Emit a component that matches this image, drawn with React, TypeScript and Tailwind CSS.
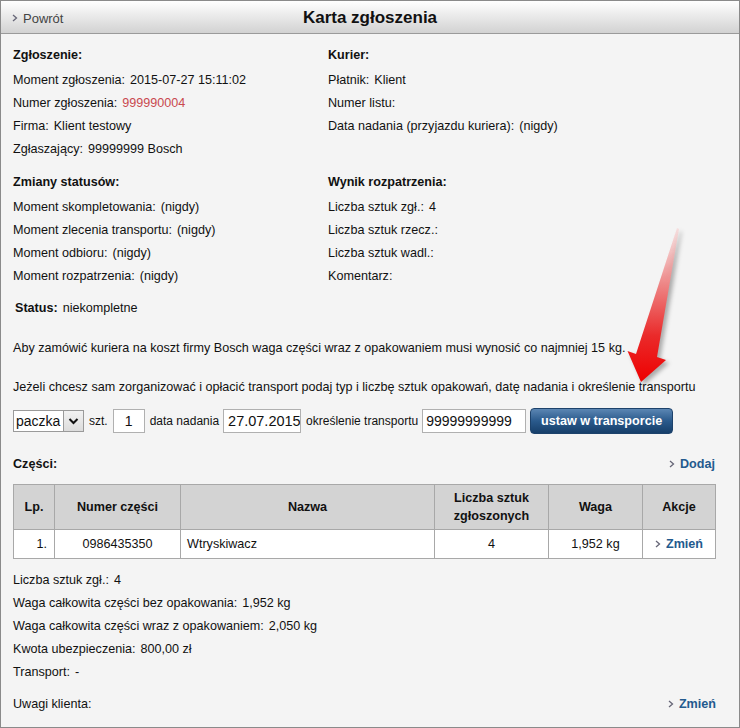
import React from 'react';

const Row: React.FC<{ label: string; value?: React.ReactNode }> = ({ label, value }) => (
  <div className="leading-[23px] whitespace-nowrap">
    {label}
    {value !== undefined && <span className="ml-[5px]">{value}</span>}
  </div>
);

const Head: React.FC<{ children: React.ReactNode }> = ({ children }) => (
  <div className="font-bold leading-[23px] mb-[2px]">{children}</div>
);

const Chevron: React.FC = () => (
  <svg width="6" height="8" viewBox="0 0 6 8" className="inline-block mr-[5px] mb-[1px]">
    <path d="M1 1 L4.5 4 L1 7" fill="none" stroke="#667" strokeWidth="1.3" />
  </svg>
);

const Arrow: React.FC = () => (
  <svg
    width="72"
    height="168"
    viewBox="0 0 72 168"
    className="absolute left-[616px] top-[220px] pointer-events-none drop-shadow-[3px_3px_2px_rgba(0,0,0,0.3)]"
  >
    <defs>
      <linearGradient id="arr" x1="0" y1="0" x2="0" y2="1">
        <stop offset="0" stopColor="#f7d0d0" stopOpacity="0.6" />
        <stop offset="0.35" stopColor="#ee8a8a" />
        <stop offset="0.7" stopColor="#ea2a2a" />
        <stop offset="1" stopColor="#ee0000" />
      </linearGradient>
    </defs>
    <path d="M60 7 L62 8 L40 136 L49 139 L24 161 L10.5 130 L19 133 Z" fill="url(#arr)" />
  </svg>
);

const App: React.FC = () => {
  return (
    <div className="w-[740px] h-[728px] bg-white font-['Liberation_Sans',Arial,sans-serif] text-[12.6px] text-[#111]">
      <div className="relative h-[728px] border border-[#8a8a8a] bg-[#f4f4f4] flex flex-col">
        <div className="h-[33px] shrink-0 border-b border-[#9a9a9a] bg-gradient-to-b from-white to-[#d2d2d2] flex items-center relative">
          <div className="absolute left-[11px] top-[8px] text-[13px] text-[#444] flex items-center">
            <Chevron />
            Powrót
          </div>
          <div className="w-full text-center font-bold text-[17px] text-[#111] pt-[1px]">Karta zgłoszenia</div>
        </div>

        <div className="px-[12px] pt-[10px]">
          <div className="grid grid-cols-[315px_1fr]">
            <div>
              <Head>Zgłoszenie:</Head>
              <Row label="Moment zgłoszenia:" value="2015-07-27 15:11:02" />
              <Row label="Numer zgłoszenia:" value={<span className="text-[#c9494f]">999990004</span>} />
              <Row label="Firma:" value="Klient testowy" />
              <Row label="Zgłaszający:" value="99999999 Bosch" />
            </div>
            <div>
              <Head>Kurier:</Head>
              <Row label="Płatnik:" value="Klient" />
              <Row label="Numer listu:" />
              <Row label="Data nadania (przyjazdu kuriera):" value="(nigdy)" />
            </div>
          </div>

          <div className="grid grid-cols-[315px_1fr] mt-[10px]">
            <div>
              <Head>Zmiany statusów:</Head>
              <Row label="Moment skompletowania:" value="(nigdy)" />
              <Row label="Moment zlecenia transportu:" value="(nigdy)" />
              <Row label="Moment odbioru:" value="(nigdy)" />
              <Row label="Moment rozpatrzenia:" value="(nigdy)" />
            </div>
            <div>
              <Head>Wynik rozpatrzenia:</Head>
              <Row label="Liczba sztuk zgł.:" value="4" />
              <Row label="Liczba sztuk rzecz.:" />
              <Row label="Liczba sztuk wadl.:" />
              <Row label="Komentarz:" />
            </div>
          </div>

          <div className="mt-[9px] ml-[2px] leading-[23px]">
            <span className="font-bold">Status:</span>
            <span className="ml-[5px]">niekompletne</span>
          </div>

          <div className="mt-[17px] leading-[23px] whitespace-nowrap">
            Aby zamówić kuriera na koszt firmy Bosch waga części wraz z opakowaniem musi wynosić co najmniej 15 kg.
          </div>
          <div className="mt-[16px] leading-[23px] whitespace-nowrap">
            Jeżeli chcesz sam zorganizować i opłacić transport podaj typ i liczbę sztuk opakowań, datę nadania i określenie transportu
          </div>

          <div className="mt-[9px] flex items-center h-[26px] text-[12px] whitespace-nowrap">
            <div className="flex w-[71px] h-[22px] border border-[#9a9a9a] bg-white">
              <div className="flex-1 pl-[2px] leading-[20px] text-[14px]">paczka</div>
              <div className="w-[20px] border-l border-[#9a9a9a] bg-gradient-to-b from-[#f2f2f2] to-[#dcdcdc] flex items-center justify-center">
                <svg width="11" height="8" viewBox="0 0 11 8">
                  <path d="M1.5 2 L5.5 6 L9.5 2" fill="none" stroke="#111" strokeWidth="2" />
                </svg>
              </div>
            </div>
            <span className="ml-[5px]">szt.</span>
            <div className="ml-[5px] w-[32px] h-[24px] border border-[#b0b0b0] bg-white text-center leading-[22px] text-[14px]">1</div>
            <span className="ml-[5px]">data nadania</span>
            <div className="ml-[4px] w-[78px] h-[24px] border border-[#b0b0b0] bg-white pl-[4px] leading-[22px] text-[14.5px] overflow-hidden">
              27.07.2015
            </div>
            <span className="ml-[5px]">określenie transportu</span>
            <div className="ml-[4px] w-[104px] h-[24px] border border-[#b0b0b0] bg-white pl-[3px] leading-[22px] text-[14px]">
              99999999999
            </div>
            <button className="ml-[4px] w-[143px] h-[26px] rounded-[4px] bg-gradient-to-b from-[#5b86b3] via-[#2a5a8c] to-[#173f6a] border border-[#1d426b] text-white font-bold text-[12.6px]">
              ustaw w transporcie
            </button>
          </div>

          <div className="mt-[19px] flex justify-between items-center leading-[23px] pr-[12px]">
            <span className="font-bold">Części:</span>
            <span className="flex items-center text-[#235a8e] font-bold">
              <Chevron />
              Dodaj
            </span>
          </div>

          <table className="mt-[8px] w-[703px] border-collapse border border-[#a8a8a8]">
            <thead>
              <tr className="bg-[#d3d3d3] h-[45px] font-bold">
                <th className="w-[41px] border border-[#a8a8a8]">Lp.</th>
                <th className="w-[126px] border border-[#a8a8a8]">Numer części</th>
                <th className="w-[254px] border border-[#a8a8a8]">Nazwa</th>
                <th className="w-[114px] border border-[#a8a8a8] leading-[18px]">
                  Liczba sztuk
                  <br />
                  zgłoszonych
                </th>
                <th className="w-[94px] border border-[#a8a8a8]">Waga</th>
                <th className="border border-[#a8a8a8]">Akcje</th>
              </tr>
            </thead>
            <tbody>
              <tr className="bg-white h-[29px]">
                <td className="border border-[#a8a8a8] text-right pr-[7px]">1.</td>
                <td className="border border-[#a8a8a8] text-center">0986435350</td>
                <td className="border border-[#a8a8a8] pl-[6px]">Wtryskiwacz</td>
                <td className="border border-[#a8a8a8] text-center">4</td>
                <td className="border border-[#a8a8a8] text-center">1,952 kg</td>
                <td className="border border-[#a8a8a8] text-center">
                  <span className="inline-flex items-center text-[#235a8e] font-bold">
                    <Chevron />
                    Zmień
                  </span>
                </td>
              </tr>
            </tbody>
          </table>

          <div className="mt-[10px]">
            <Row label="Liczba sztuk zgł.:" value="4" />
            <Row label="Waga całkowita części bez opakowania:" value="1,952 kg" />
            <Row label="Waga całkowita części wraz z opakowaniem:" value="2,050 kg" />
            <Row label="Kwota ubezpieczenia:" value="800,00 zł" />
            <Row label="Transport:" value="-" />
          </div>

          <div className="mt-[9px] flex justify-between items-center leading-[23px] pr-[11px]">
            <span>Uwagi klienta:</span>
            <span className="flex items-center text-[#235a8e] font-bold">
              <Chevron />
              Zmień
            </span>
          </div>
        </div>

        <Arrow />
      </div>
    </div>
  );
};

export default App;
